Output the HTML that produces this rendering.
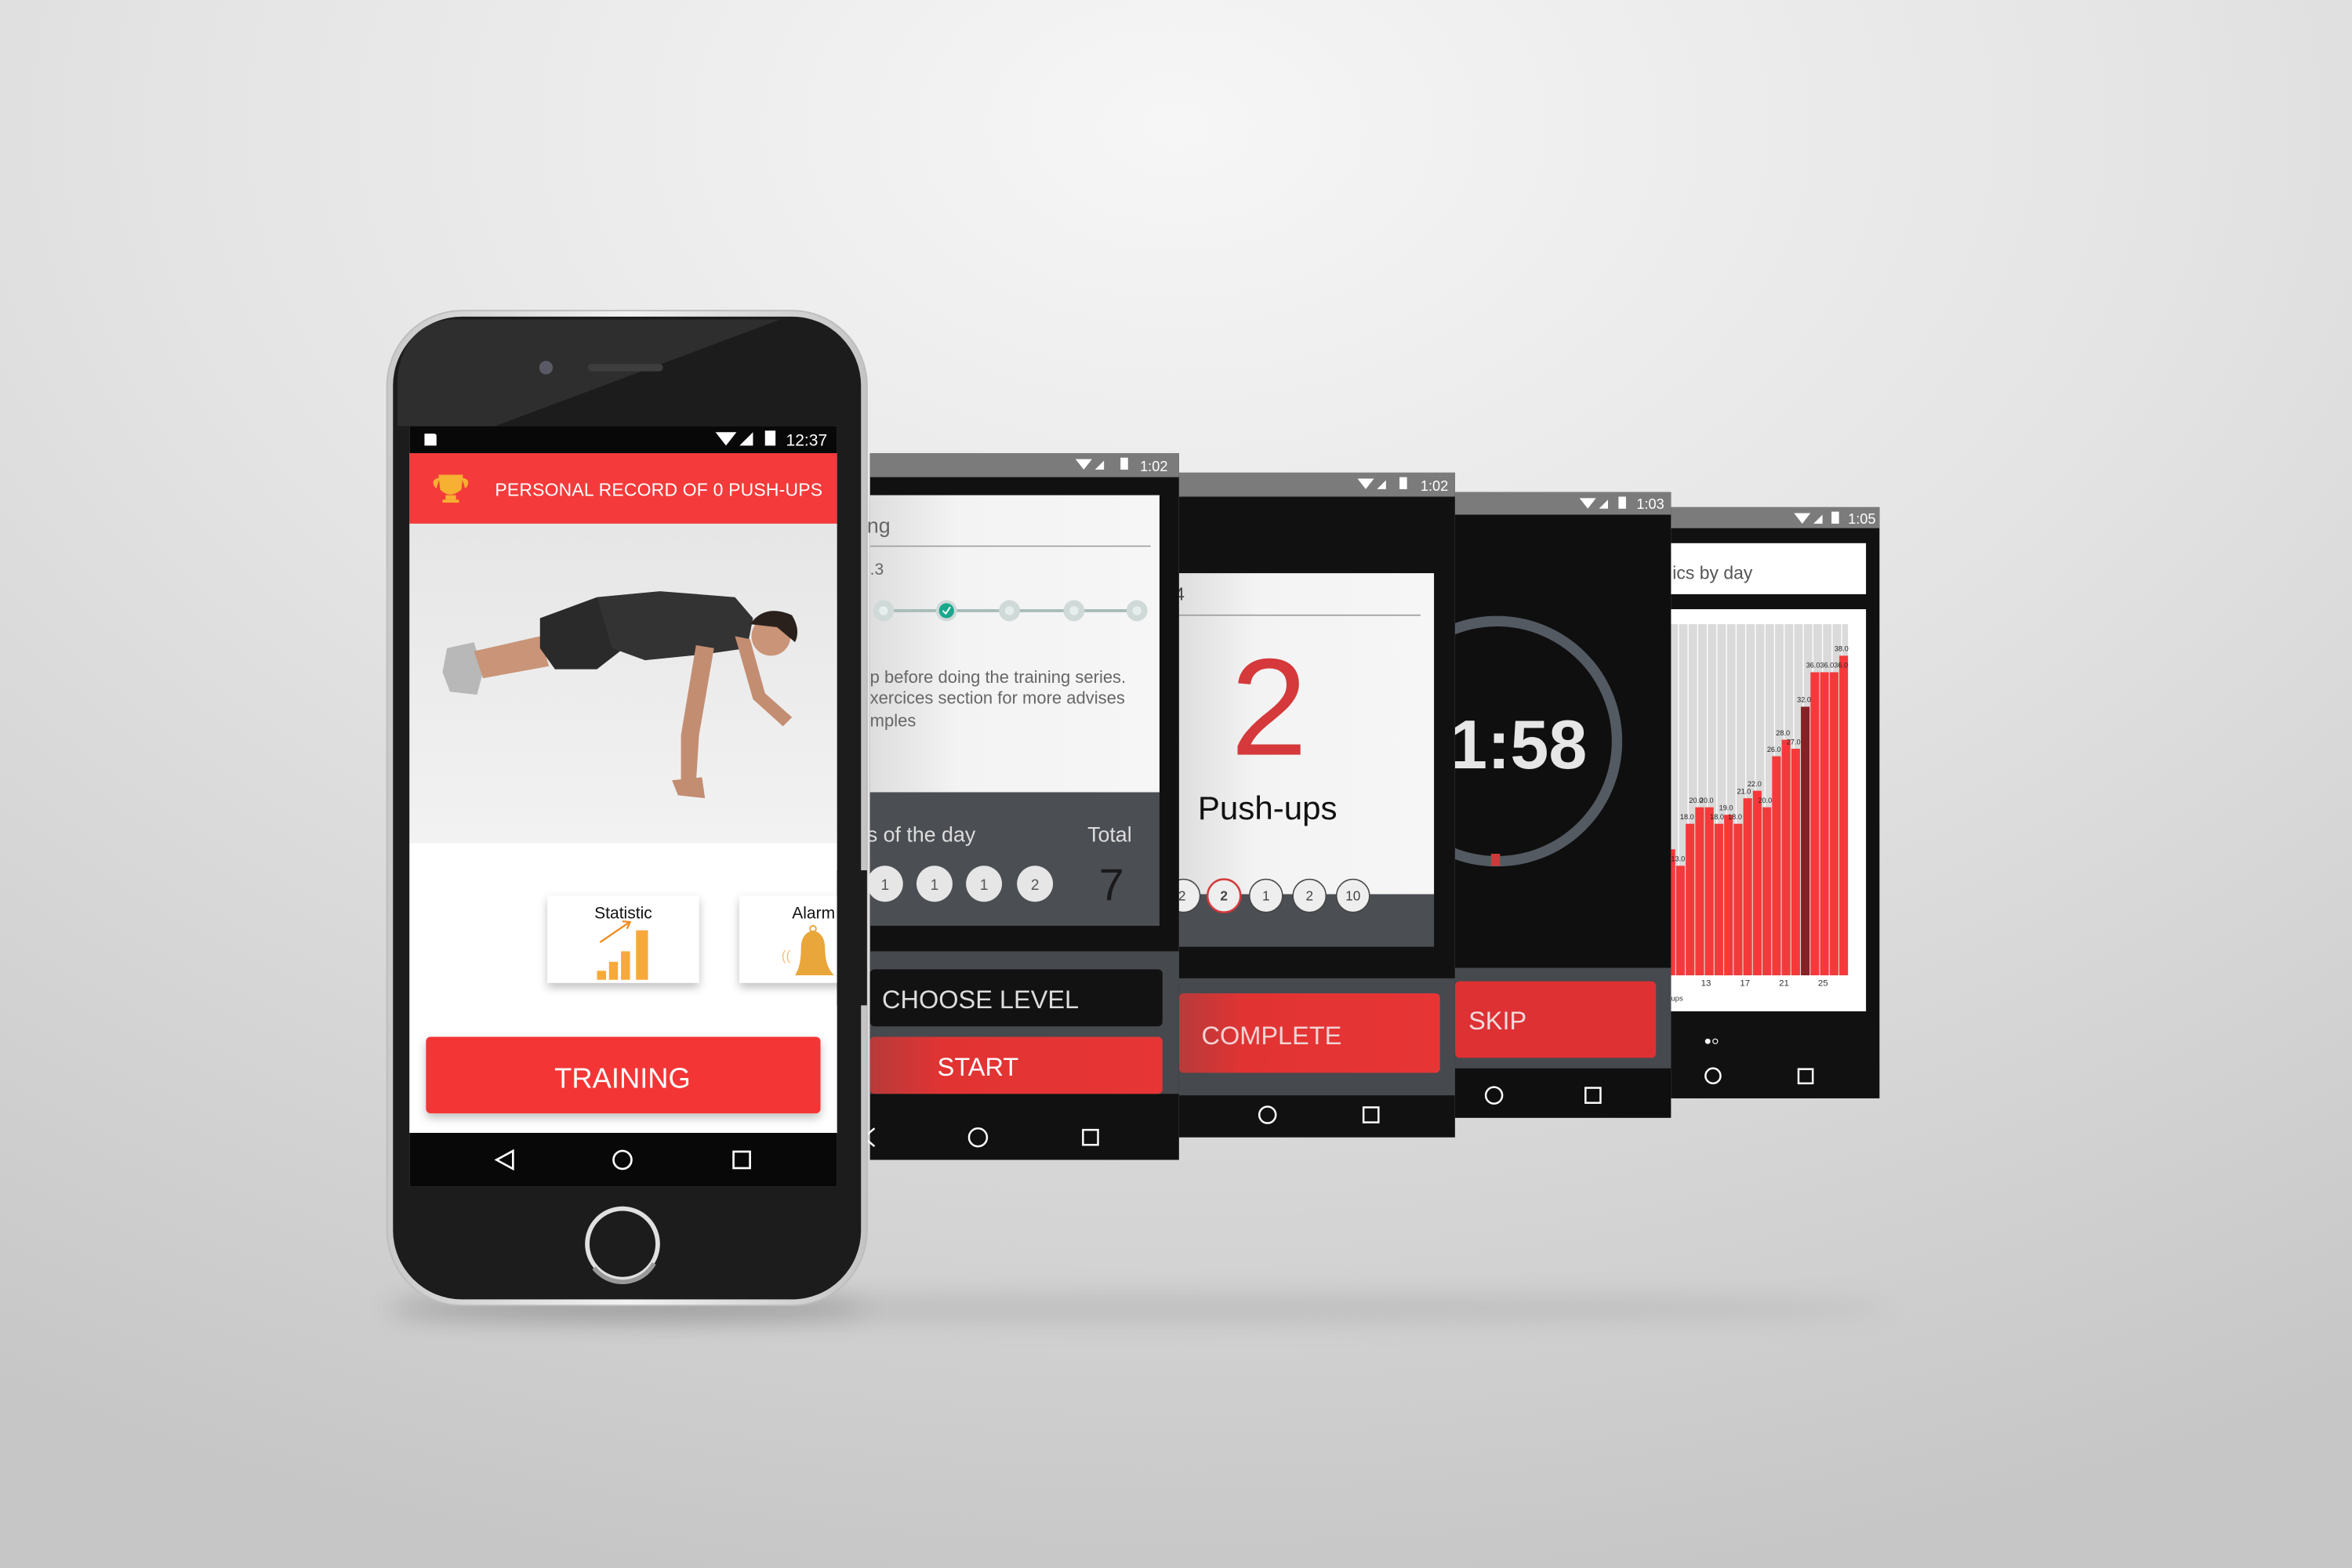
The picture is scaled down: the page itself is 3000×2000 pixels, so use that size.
<!DOCTYPE html>
<html><head><meta charset="utf-8"><style>
html,body{margin:0;padding:0;width:3000px;height:2000px;overflow:hidden;background:#d8d8d8}
svg{display:block}
text{font-family:"Liberation Sans",sans-serif}
</style></head><body>
<svg width="3000" height="2000" viewBox="0 0 1568 1045" preserveAspectRatio="none" xmlns="http://www.w3.org/2000/svg">
<defs>
<radialGradient id="bg" cx="50%" cy="8%" r="95%">
<stop offset="0" stop-color="#f6f6f6"/><stop offset="0.45" stop-color="#e4e4e4"/><stop offset="1" stop-color="#c6c6c6"/></radialGradient>
<linearGradient id="silver" x1="0" x2="1"><stop offset="0" stop-color="#c9c9c9"/><stop offset="0.5" stop-color="#f2f2f2"/><stop offset="1" stop-color="#c4c4c4"/></linearGradient>
<linearGradient id="photo" x1="0" y1="0" x2="0" y2="1"><stop offset="0" stop-color="#e6e6e6"/><stop offset="1" stop-color="#f2f2f2"/></linearGradient>
<linearGradient id="card2" x1="0" x2="1"><stop offset="0" stop-color="#dedede"/><stop offset="0.3" stop-color="#f3f3f3"/><stop offset="1" stop-color="#f6f6f6"/></linearGradient>
<linearGradient id="red2" x1="0" x2="1"><stop offset="0" stop-color="#b83a3a"/><stop offset="0.25" stop-color="#e23333"/><stop offset="1" stop-color="#e73535"/></linearGradient>
<filter id="blur" x="-20%" y="-200%" width="140%" height="500%"><feGaussianBlur stdDeviation="8"/></filter>
<filter id="sh" x="-20%" y="-20%" width="140%" height="160%"><feDropShadow dx="0" dy="3" stdDeviation="3" flood-color="#000" flood-opacity="0.25"/></filter>
<clipPath id="c4"><rect x="970" y="343" width="144" height="302"/></clipPath>
<clipPath id="c5"><rect x="1114" y="406" width="130" height="268"/></clipPath>
</defs>
<rect width="1568" height="1045" fill="url(#bg)"/>
<ellipse cx="760" cy="872" rx="500" ry="10" fill="#8a8a8a" opacity="0.25" filter="url(#blur)"/>
<ellipse cx="418" cy="872" rx="160" ry="8" fill="#555" opacity="0.35" filter="url(#blur)"/>

<!-- Screen 5 -->
<rect x="1114" y="338" width="139" height="394" fill="#111"/>
<rect x="1114" y="338" width="139" height="14" fill="#7b7b7b"/>
<text x="1232" y="349" font-size="9.5" fill="#fff">1:05</text>
<path d="M1196 342 L1207 342 L1201.5 349Z M1209 349 L1215 343 L1215 349Z" fill="#fff"/><rect x="1221" y="341" width="5" height="8" fill="#fff"/>
<rect x="1114" y="362" width="130" height="34" fill="#fff"/>
<text x="1115" y="386" font-size="12" fill="#555">ics by day</text>
<rect x="1114" y="406" width="130" height="268" fill="#fff"/>
<g clip-path="url(#c5)">
<rect x="1114" y="416" width="118" height="234" fill="#dadada"/>
<g stroke="#fff" stroke-width="0.7">
<path d="M1119 416V650M1125.4 416V650M1131.8 416V650M1138.2 416V650M1144.6 416V650M1151 416V650M1157.4 416V650M1163.8 416V650M1170.2 416V650M1176.6 416V650M1183 416V650M1189.4 416V650M1195.8 416V650M1202.2 416V650M1208.6 416V650M1215 416V650M1221.4 416V650M1227.8 416V650"/>
</g>
<g fill="#f5393a">
<rect x="1226.2" y="437" width="5.8" height="213"/>
<rect x="1219.8" y="448" width="5.8" height="202"/>
<rect x="1213.4" y="448" width="5.8" height="202"/>
<rect x="1207" y="448" width="5.8" height="202"/>
<rect x="1200.6" y="471" width="5.8" height="179" fill="#852224"/>
<rect x="1194.2" y="499" width="5.8" height="151"/>
<rect x="1187.8" y="493" width="5.8" height="157"/>
<rect x="1181.4" y="504" width="5.8" height="146"/>
<rect x="1175" y="538" width="5.8" height="112"/>
<rect x="1168.6" y="527" width="5.8" height="123"/>
<rect x="1162.2" y="532" width="5.8" height="118"/>
<rect x="1155.8" y="549" width="5.8" height="101"/>
<rect x="1149.4" y="543" width="5.8" height="107"/>
<rect x="1143" y="549" width="5.8" height="101"/>
<rect x="1136.6" y="538" width="5.8" height="112"/>
<rect x="1130.2" y="538" width="5.8" height="112"/>
<rect x="1123.8" y="549" width="5.8" height="101"/>
<rect x="1117.4" y="577" width="5.8" height="73"/>
<rect x="1111" y="566" width="5.8" height="84"/>
</g>
<g font-size="4.8" fill="#222">
<text x="1223" y="434">38.0</text><text x="1204" y="445">36.036.036.0</text><text x="1198" y="468">32.0</text>
<text x="1184" y="490">28.0</text><text x="1191" y="496">27.0</text><text x="1178" y="501">26.0</text>
<text x="1165" y="524">22.0</text><text x="1158" y="529">21.0</text><text x="1172" y="535">20.0</text>
<text x="1126" y="535">20.0</text><text x="1133" y="535">20.0</text><text x="1120" y="546">18.0</text>
<text x="1146" y="540">19.0</text><text x="1140" y="546">18.0</text><text x="1152" y="546">18.0</text><text x="1114" y="574">13.0</text>
</g>
</g>
<g font-size="6" fill="#333"><text x="1134" y="657">13</text><text x="1160" y="657">17</text><text x="1186" y="657">21</text><text x="1212" y="657">25</text><text x="1114" y="667" font-size="5">ups</text></g>
<circle cx="1138.5" cy="694" r="1.8" fill="#fff"/><circle cx="1143.5" cy="694" r="1.6" fill="none" stroke="#fff" stroke-width="0.6"/>
<circle cx="1142" cy="717" r="5" fill="none" stroke="#fff" stroke-width="1.3"/>
<rect x="1199" y="712.5" width="9.5" height="9.5" fill="none" stroke="#fff" stroke-width="1.3"/>

<!-- Screen 4 -->
<rect x="970" y="328" width="144" height="417" fill="#0f0f0f"/>
<rect x="970" y="328" width="144" height="15" fill="#7b7b7b"/>
<text x="1091" y="339" font-size="9.5" fill="#fff">1:03</text>
<path d="M1053 332 L1064 332 L1058.5 339Z M1066 339 L1072 333 L1072 339Z" fill="#fff"/><rect x="1079" y="331" width="5" height="8" fill="#fff"/>
<g clip-path="url(#c4)">
<circle cx="998" cy="494" r="80" fill="none" stroke="#535a62" stroke-width="7"/>
<rect x="994" y="569" width="6" height="8" fill="#d0393b"/>
<text x="1012" y="512" font-size="46" font-weight="bold" fill="#e6e6e6" text-anchor="middle">1:58</text>
</g>
<rect x="970" y="645" width="144" height="67" fill="#46494e"/>
<rect x="970" y="654" width="134" height="51" rx="3" fill="#dd3134"/>
<text x="979" y="686" font-size="17" fill="#f2dada">SKIP</text>
<circle cx="996" cy="730" r="5.5" fill="none" stroke="#fff" stroke-width="1.3"/>
<rect x="1057" y="725" width="10" height="10" fill="none" stroke="#fff" stroke-width="1.3"/>

<!-- Screen 3 -->
<rect x="786" y="315" width="184" height="443" fill="#111"/>
<rect x="786" y="315" width="184" height="16" fill="#7b7b7b"/>
<text x="947" y="327" font-size="9.5" fill="#fff">1:02</text>
<path d="M905 319 L916 319 L910.5 326Z M918 326 L924 320 L924 326Z" fill="#fff"/><rect x="933" y="318" width="5" height="8" fill="#fff"/>
<rect x="786" y="382" width="170" height="214" fill="url(#card2)"/>
<text x="783" y="400" font-size="12" fill="#444">4</text>
<line x1="786" y1="410" x2="947" y2="410" stroke="#999" stroke-width="0.8"/>
<text x="846" y="503" font-size="92" fill="#d5393b" text-anchor="middle">2</text>
<text x="845" y="546" font-size="22" fill="#111" text-anchor="middle">Push-ups</text>
<rect x="786" y="596" width="170" height="35" fill="#4b4e53"/>
<g stroke="#444" stroke-width="0.8" fill="#eee">
<circle cx="789" cy="597" r="11"/><circle cx="816" cy="597" r="11" stroke="#d5393b" stroke-width="1.3"/><circle cx="844" cy="597" r="11"/><circle cx="873" cy="597" r="11"/><circle cx="902" cy="597" r="11"/>
</g>
<g font-size="9" fill="#444" text-anchor="middle"><text x="788" y="600">2</text><text x="816" y="600" font-weight="bold">2</text><text x="844" y="600">1</text><text x="873" y="600">2</text><text x="902" y="600">10</text></g>
<rect x="786" y="652" width="184" height="78" fill="#46494e"/>
<rect x="786" y="662" width="174" height="53" rx="3" fill="url(#red2)"/>
<text x="801" y="696" font-size="17" fill="#f2d3d3">COMPLETE</text>
<circle cx="845" cy="743" r="5.5" fill="none" stroke="#fff" stroke-width="1.3"/>
<rect x="909" y="738" width="10" height="10" fill="none" stroke="#fff" stroke-width="1.3"/>

<!-- Screen 2 -->
<rect x="580" y="302" width="206" height="471" fill="#111"/>
<rect x="580" y="302" width="206" height="16" fill="#7b7b7b"/>
<text x="760" y="314" font-size="9.5" fill="#fff">1:02</text>
<path d="M717 306 L728 306 L722.5 313Z M730 313 L736 307 L736 313Z" fill="#fff"/><rect x="747" y="305" width="5" height="8" fill="#fff"/>
<rect x="580" y="330" width="193" height="198" fill="url(#card2)"/>
<text x="578" y="355" font-size="14" fill="#666">ng</text>
<line x1="580" y1="364" x2="767" y2="364" stroke="#999" stroke-width="0.8"/>
<text x="580" y="383" font-size="11" fill="#666">.3</text>
<line x1="585" y1="407" x2="758" y2="407" stroke="#a9bcba" stroke-width="2"/>
<g fill="#cfd9d8"><circle cx="589" cy="407" r="7"/><circle cx="673" cy="407" r="7"/><circle cx="716" cy="407" r="7"/><circle cx="758" cy="407" r="7"/></g>
<g fill="#e6eded"><circle cx="589" cy="407" r="3"/><circle cx="673" cy="407" r="3"/><circle cx="716" cy="407" r="3"/><circle cx="758" cy="407" r="3"/></g>
<circle cx="631" cy="407" r="7" fill="#cfd9d8"/><circle cx="631" cy="407" r="5" fill="#1aa88c"/>
<path d="M628.5 407 L630.5 409 L633.5 404.5" stroke="#fff" stroke-width="1" fill="none"/>
<g font-size="11.5" fill="#666"><text x="580" y="455">p before doing the training series.</text><text x="580" y="469">xercices section for more advises</text><text x="580" y="484">mples</text></g>
<rect x="580" y="528" width="193" height="89" fill="#4b4e53"/>
<text x="578" y="561" font-size="14" fill="#ddd">s of the day</text>
<text x="725" y="561" font-size="14" fill="#ddd">Total</text>
<g fill="#e6e6e6"><circle cx="590" cy="589" r="12"/><circle cx="623" cy="589" r="12"/><circle cx="656" cy="589" r="12"/><circle cx="690" cy="589" r="12"/></g>
<g font-size="10" fill="#555" text-anchor="middle"><text x="590" y="593">1</text><text x="623" y="593">1</text><text x="656" y="593">1</text><text x="690" y="593">2</text></g>
<text x="741" y="600" font-size="30" fill="#1a1a1a" text-anchor="middle">7</text>
<rect x="580" y="634" width="206" height="95" fill="#46494e"/>
<rect x="580" y="646" width="195" height="38" rx="3" fill="#121212"/>
<text x="588" y="672" font-size="17" fill="#dcdcdc">CHOOSE LEVEL</text>
<rect x="580" y="691" width="195" height="38" rx="3" fill="url(#red2)"/>
<text x="652" y="717" font-size="17" fill="#fff" text-anchor="middle">START</text>
<path d="M583 752 L576 758 L583 764" fill="none" stroke="#fff" stroke-width="1.3"/>
<circle cx="652" cy="758" r="6" fill="none" stroke="#fff" stroke-width="1.3"/>
<rect x="722" y="753" width="10" height="10" fill="none" stroke="#fff" stroke-width="1.3"/>

<!-- Phone 1 -->
<rect x="258" y="207" width="320" height="663" rx="50" fill="url(#silver)" stroke="#bdbdbd" stroke-width="1"/>
<rect x="262" y="211" width="312" height="655" rx="46" fill="#1c1c1c"/>
<path d="M300 213 L520 213 L330 284 L265 284 L265 250 Q270 216 300 213Z" fill="#2e2e2e"/>
<circle cx="364" cy="245" r="4.5" fill="#5a5a66"/>
<rect x="392" y="242.5" width="50" height="5" rx="2.5" fill="#3e3e3e"/>
<rect x="273" y="284" width="285" height="507" fill="#fff"/>
<rect x="273" y="284" width="285" height="18" fill="#080808"/>
<path d="M283 289 L290 289 L291 290 L291 297 L283 297Z" fill="#fff"/>
<path d="M477 288 L491 288 L484 297Z M493 297 L502 288 L502 297Z" fill="#fff"/>
<rect x="510" y="287" width="7" height="10" fill="#fff"/>
<text x="524" y="297" font-size="11" fill="#fff">12:37</text>
<rect x="273" y="302" width="285" height="47" fill="#f43a3a"/>
<path d="M293 317 L308 317 L307 326 Q300 332 294 326Z M293 319 Q287 320 291 325 M308 319 Q314 320 310 325" fill="#f6b032" stroke="#f6b032" stroke-width="1.2"/>
<rect x="297" y="330" width="7" height="3" fill="#f6b032"/><rect x="295" y="333" width="11" height="2" fill="#f6b032"/>
<text x="330" y="330.5" font-size="12" fill="#fff" letter-spacing="0.1">PERSONAL RECORD OF 0 PUSH-UPS</text>
<rect x="273" y="349" width="285" height="213" fill="url(#photo)"/>
<!-- person -->
<path d="M298 432 L316 428 L322 448 L318 463 L300 461 L295 448Z" fill="#b8b8b8"/>
<path d="M316 434 L360 424 L366 444 L322 452Z" fill="#c99478"/>
<path d="M360 412 L398 398 L414 402 L416 432 L398 446 L370 446 L360 432Z" fill="#2a2a2a"/>
<path d="M398 398 L440 394 L490 398 L502 412 L498 432 L470 436 L430 440 L408 432Z" fill="#333"/>
<path d="M464 430 L476 432 L466 490 L464 522 L454 524 L454 490Z" fill="#c38d72"/>
<path d="M448 520 L468 518 L470 532 L452 530Z" fill="#c38d72"/>
<path d="M490 424 L500 426 L510 462 L528 478 L522 484 L502 466Z" fill="#c38d72"/>
<circle cx="514" cy="424" r="13" fill="#c99478"/>
<path d="M500 416 Q510 402 528 410 Q534 420 530 428 L518 418 Z" fill="#2b211c"/>
<rect x="273" y="562" width="285" height="193" fill="#fff"/>
<rect x="365" y="597" width="101" height="58" fill="#fff" filter="url(#sh)"/>
<text x="415.5" y="612" font-size="11" fill="#111" text-anchor="middle">Statistic</text>
<g fill="#f8a93b"><rect x="398" y="647" width="6" height="6"/><rect x="406" y="641" width="6" height="12"/><rect x="414" y="634" width="6" height="19"/><rect x="424" y="620" width="8" height="33"/></g>
<path d="M400 628 L419 615" stroke="#f08a1a" stroke-width="1.2"/><path d="M415 614 L420 614.5 L418 619" fill="none" stroke="#f08a1a" stroke-width="1.2"/>
<rect x="493" y="597" width="70" height="58" fill="#fff" filter="url(#sh)"/>
<rect x="558" y="580" width="20" height="90" fill="#1c1c1c"/>
<text x="528" y="612" font-size="11" fill="#111">Alarm</text>
<path d="M530 650 Q534 644 534 632 Q534 622 542 620 Q550 622 550 632 Q550 644 556 650Z" fill="#e9a63a"/>
<circle cx="542" cy="619" r="2" fill="none" stroke="#e9a63a" stroke-width="1"/>
<text x="521" y="640" font-size="9" fill="#f1c27a">((</text>
<rect x="284" y="691" width="263" height="51" rx="3" fill="#f43535" filter="url(#sh)"/>
<text x="415" y="725" font-size="19" fill="#fff" text-anchor="middle">TRAINING</text>
<rect x="273" y="755" width="285" height="36" fill="#080808"/>
<path d="M342 767 L331 773 L342 779Z" fill="none" stroke="#fff" stroke-width="1.4"/>
<circle cx="415" cy="773" r="6" fill="none" stroke="#fff" stroke-width="1.4"/>
<rect x="489" y="767.5" width="11" height="11" fill="none" stroke="#fff" stroke-width="1.4"/>
<circle cx="415" cy="829" r="23.5" fill="none" stroke="#e0e0e0" stroke-width="3"/>
<path d="M396 845 A24 24 0 0 0 436 842" fill="none" stroke="#999" stroke-width="3"/>
</svg>
</body></html>
